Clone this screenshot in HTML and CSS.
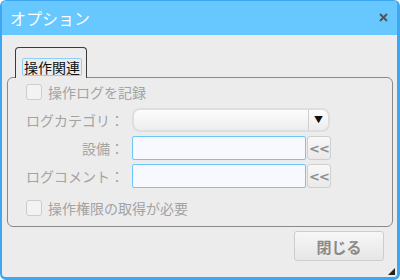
FILE: index.html
```html
<!DOCTYPE html>
<html lang="ja">
<head>
  <meta charset="UTF-8" />
  <title>オプション</title>
  <link rel="stylesheet" href="styles.css">
</head>
<body>
  <div class="dialog">
    <div class="titlebar">
      <span class="title">オプション</span>
      <span class="close">
        <svg width="9" height="9" viewBox="0 0 9 9"><path d="M1 1L8 8M8 1L1 8" stroke="#555" stroke-width="2"/></svg>
      </span>
    </div>
    <div class="content">
      <div class="tabs">
        <div class="tab"><span class="tab-label">操作関連</span></div>
      </div>
      <div class="panel">
        <label class="check"><span class="box"></span>操作ログを記録</label>
        <div class="form">
          <div class="label">ログカテゴリ：</div>
          <div class="select">
            <span class="select-value"></span>
            <span class="select-arrow">▼</span>
          </div>
          <div class="label">設備：</div>
          <div class="field">
            <input type="text" class="text" />
            <button class="small-btn">&lt;&lt;</button>
          </div>
          <div class="label">ログコメント：</div>
          <div class="field">
            <input type="text" class="text" />
            <button class="small-btn">&lt;&lt;</button>
          </div>
        </div>
        <label class="check check-last"><span class="box"></span>操作権限の取得が必要</label>
      </div>
      <div class="footer">
        <button class="btn">閉じる</button>
      </div>
    </div>
    <span class="grip"></span>
  </div>
</body>
</html>
```

FILE: styles.css
```css
html, body {
  margin: 0;
  padding: 0;
  background: white;
}
body {
  font-family: "Noto Sans CJK JP", "Noto Sans", sans-serif;
}
.dialog {
  position: relative;
  width: 400px;
  height: 280px;
  box-sizing: border-box;
  border-style: solid;
  border-color: #3fa7f2;
  border-width: 1px 3px 3px 2px;
  border-radius: 6px;
  background: #ececec;
  overflow: hidden;
}
.titlebar {
  height: 34px;
  background: #66c8ff;
  display: flex;
  align-items: center;
  justify-content: space-between;
  padding: 0 9px 0 8px;
}
.title {
  color: white;
  font-size: 16px;
  line-height: 20px;
}
.close {
  display: flex;
  margin-top: -2px;
}
.content {
  padding: 12px 4px 0 5px;
}
.tabs {
  display: flex;
  padding-left: 8px;
}
.tab {
  position: relative;
  z-index: 1;
  height: 31px;
  box-sizing: border-box;
  width: 72px;
  border: 1px solid #3a3a3a;
  border-bottom: none;
  border-radius: 4px 4px 0 0;
  background: #ececec;
  margin-bottom: -1px;
  padding: 6px 0 0 6px;
}
.tab-label {
  display: inline-block;
  font-size: 14px;
  line-height: 16px;
  color: #111;
  border: 1px solid #8fd0f7;
  border-radius: 2px;
  padding: 0 1px;
}
.panel {
  border: 1px solid #8a8a8a;
  border-radius: 6px;
  padding: 6px 18px 10px 18px;
}
.check {
  display: flex;
  align-items: center;
  gap: 6px;
  height: 16px;
  font-size: 14px;
  color: #a3a3a3;
}
.check-last {
  margin-top: 12px;
}
.box {
  width: 14px;
  height: 14px;
  border: 1px solid #cdcdcd;
  border-radius: 3px;
  background: #f3f3f3;
}
.form {
  display: grid;
  grid-template-columns: 98px auto;
  grid-auto-rows: 24px;
  column-gap: 8px;
  row-gap: 4px;
  margin-top: 8px;
  justify-content: start;
}
.label {
  text-align: right;
  font-size: 14px;
  line-height: 24px;
  color: #a3a3a3;
  white-space: nowrap;
}
.select {
  width: 198px;
  height: 24px;
  box-sizing: border-box;
  border: 2px solid #dedede;
  border-radius: 8px;
  background: linear-gradient(#fdfdfd, #ededed);
  display: flex;
}
.select-value {
  flex: 1;
}
.select-arrow {
  width: 19px;
  border-left: 1px solid #cfcfcf;
  font-size: 9px;
  line-height: 20px;
  text-align: center;
  color: #111;
}
.field {
  display: flex;
  gap: 1px;
}
.text {
  width: 174px;
  height: 24px;
  box-sizing: border-box;
  border: 1px solid #6cc6fb;
  border-radius: 2px;
  background: #f8f9ff;
  margin: 0;
  padding: 0 4px;
}
.small-btn {
  width: 24px;
  height: 24px;
  box-sizing: border-box;
  border: 1px solid #cfcfcf;
  border-radius: 3px;
  background: linear-gradient(#f8f8f8, #e9e9e9);
  color: #8f8f8f;
  font-family: "DejaVu Sans", sans-serif;
  font-weight: bold;
  font-size: 13px;
  padding: 0;
  letter-spacing: -1px;
}
.footer {
  display: flex;
  justify-content: flex-end;
  padding: 4px 9px 0 0;
}
.btn {
  width: 90px;
  height: 30px;
  border: 1px solid #cdcdcd;
  border-radius: 3px;
  background: linear-gradient(#f7f7f7, #e6e6e6);
  color: #8a8a8a;
  font-family: "Noto Sans CJK JP", sans-serif;
  font-weight: bold;
  font-size: 15px;
  padding: 0;
}
.grip {
  position: absolute;
  right: 2px;
  bottom: 2px;
  width: 0;
  height: 0;
  border-style: solid;
  border-width: 0 0 7px 7px;
  border-color: transparent transparent #222 transparent;
}
```
